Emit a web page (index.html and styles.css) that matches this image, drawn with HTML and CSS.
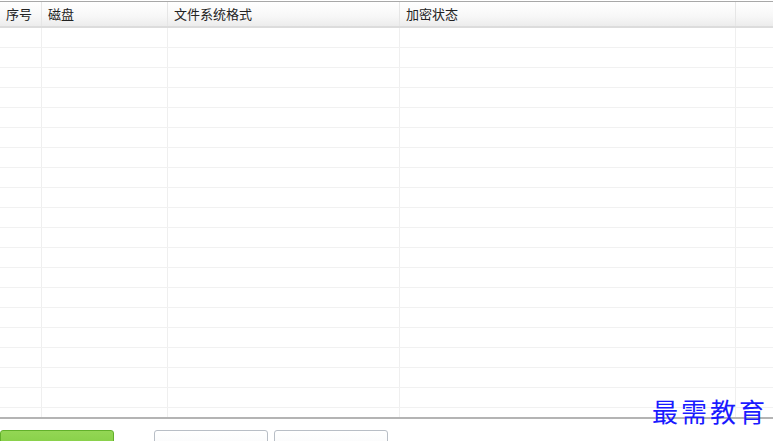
FILE: index.html
```html
<!DOCTYPE html>
<html lang="zh-CN">
<head>
    <meta charset="UTF-8">
    <title>磁盘加密</title>
    <link rel="stylesheet" href="styles.css">
</head>
<body>
    <div class="disk-list">
        <div class="row head">
            <div class="cell">序号</div>
            <div class="cell">磁盘</div>
            <div class="cell">文件系统格式</div>
            <div class="cell">加密状态</div>
            <div class="cell"></div>
        </div>
        <div id="rows"></div>
    </div>

    <div class="actions">
        <button class="btn btn-green"></button>
        <div class="btn-group">
            <button class="btn btn-white"></button>
            <button class="btn btn-white"></button>
        </div>
    </div>

    <div class="watermark">最需教育</div>

    <script>
        // empty rows for the list
        var rows = document.getElementById("rows");
        for (var i = 0; i < 20; i++) {
            var row = document.createElement("div");
            row.className = "row";
            for (var j = 0; j < 5; j++) {
                var cell = document.createElement("div");
                cell.className = "cell";
                row.appendChild(cell);
            }
            rows.appendChild(row);
        }
    </script>
</body>
</html>
```

FILE: styles.css
```css
body {
    margin: 0;
    font-family: "Noto Sans CJK SC", "Liberation Sans", sans-serif;
    background: #fff;
    color: #333;
    width: 773px;
    height: 441px;
    overflow: hidden;
    position: relative;
}

.disk-list {
    margin-top: 1px;
    border-top: 1px solid #a8a8a8;
    border-bottom: 2px solid #b4b4b4;
    height: 415px;
    overflow: hidden;
}

.row {
    display: grid;
    grid-template-columns: 42px 126px 232px 336px 1fr;
    height: 20px;
    border-bottom: 1px solid #f1f1f1;
    box-sizing: border-box;
}

.row .cell {
    border-right: 1px solid #efefef;
}

.row .cell:last-child {
    border-right: none;
}

.head {
    height: 26px;
    background: linear-gradient(#ffffff, #f7f7f7 60%, #ececec);
    border-bottom: 2px solid #dcdcdc;
}

.head .cell {
    font-size: 13px;
    line-height: 24px;
    padding-left: 6px;
    color: #222;
    border-right: 1px solid #e6e6e6;
}

.actions {
    display: flex;
    padding-top: 11px;
}

.btn {
    width: 114px;
    height: 30px;
    border-radius: 3px;
    padding: 0;
}

.btn-green {
    background: linear-gradient(#93d654, #79c83a);
    border: 1px solid #62b02a;
}

.btn-group {
    display: flex;
    gap: 6px;
    margin-left: 40px;
}

.btn-white {
    background: linear-gradient(#ffffff, #f4f6f8);
    border: 1px solid #b8bec6;
}

.watermark {
    position: absolute;
    left: 652px;
    top: 392px;
    font-family: "Noto Sans CJK SC", serif;
    font-size: 26px;
    color: #1a1aff;
    letter-spacing: 3px;
}
```
